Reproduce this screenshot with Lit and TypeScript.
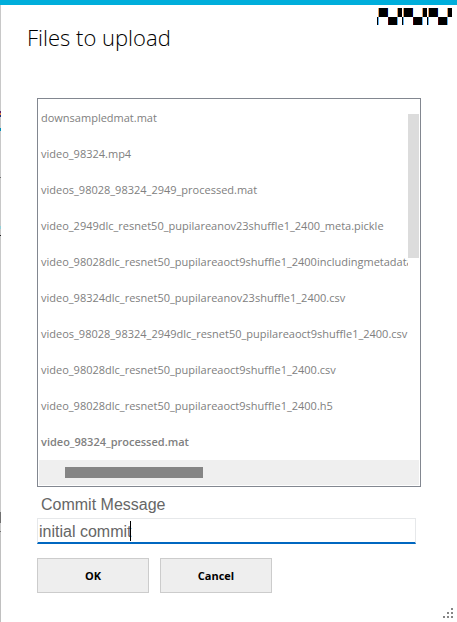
import { LitElement, html, css } from "lit";
import { customElement, state } from "lit/decorators.js";

interface FileEntry {
  name: string;
  strong?: boolean;
}

@customElement("app-root")
export class AppRoot extends LitElement {
  static styles = css`
    :host {
      display: block;
      font-family: "Open Sans", "Noto Sans", sans-serif;
      color: #808080;
    }
    .dialog {
      box-sizing: border-box;
      position: relative;
      display: flex;
      flex-direction: column;
      min-height: 100vh;
      background: #fff;
      border-top: 5px solid #00aedb;
    }
    .edge {
      position: absolute;
      left: 0;
      top: 0;
      bottom: 0;
      width: 1px;
      background: linear-gradient(
        #c8c8c8 106px, #60206a 106px, #60206a 108px, #e08040 108px, #e08040 110px,
        #203080 110px, #203080 112px, #c8c8c8 112px, #c8c8c8 123px, #0090b8 123px,
        #0090b8 126px, #c8c8c8 126px, #c8c8c8 172px, #707070 172px, #707070 173px,
        #c8c8c8 173px, #c8c8c8 221px, #90d0d8 221px, #90d0d8 224px, #c8c8c8 224px,
        #c8c8c8 230px, #202020 230px, #202020 231px, #c8c8c8 231px, #c8c8c8 507px,
        #707070 507px, #707070 518px, #c8c8c8 518px, #c8c8c8 526px, #707070 526px,
        #707070 527px, #c0c0c0 527px
      );
    }
    .header {
      display: flex;
      justify-content: space-between;
      align-items: flex-start;
      padding: 3px 5px 0 27px;
      height: 90px;
    }
    h1 {
      margin: 13px 0 0;
      font-size: 22px;
      line-height: 32px;
      font-weight: 300;
      color: #000;
    }
    .window-buttons {
      display: flex;
    }
    .window-button {
      display: block;
      width: 25px;
      height: 17px;
      padding: 0;
      border: 0;
      background: none;
    }
    .window-button svg {
      display: block;
    }
    form {
      display: flex;
      flex-direction: column;
      padding: 0 36px 0 37px;
    }
    .list {
      border: 1px solid #828790;
      padding: 1px;
    }
    .viewport {
      display: flex;
      height: 360px;
    }
    ul {
      flex: 1;
      min-width: 0;
      margin: 0;
      padding: 0;
      overflow: hidden;
      list-style: none;
    }
    li {
      padding-left: 2px;
      font-size: 11px;
      line-height: 36px;
      white-space: nowrap;
    }
    .strong {
      font-weight: 600;
    }
    .track-y {
      width: 11px;
      padding-top: 14px;
      box-sizing: border-box;
    }
    .thumb-y {
      height: 144px;
      background: #dcdcdc;
    }
    .track-x {
      height: 25px;
      padding: 7px 26px;
      box-sizing: border-box;
      background: #efefef;
    }
    .thumb-x {
      width: 42%;
      height: 11px;
      background: #858585;
    }
    label {
      margin: 8px 0 3px 4px;
      font: 16px/20px "Liberation Sans", Arial, sans-serif;
      color: #666;
    }
    .field {
      position: relative;
      margin-right: 5px;
    }
    input {
      display: block;
      box-sizing: border-box;
      width: 100%;
      height: 26px;
      padding: 2px 1px 0;
      border: 1px solid #e6e8ea;
      border-bottom: 2px solid #0067c0;
      border-radius: 0;
      outline: none;
      background: #fff;
      color: #666;
      caret-color: transparent;
      font: 16px "Liberation Sans", Arial, sans-serif;
    }
    .caret {
      position: absolute;
      left: 93px;
      top: 3px;
      width: 1px;
      height: 20px;
      background: #000;
    }
    .actions {
      display: flex;
      gap: 11px;
      margin-top: 14px;
    }
    .action {
      width: 112px;
      height: 35px;
      padding: 0;
      border: 1px solid #cccccc;
      background: #eeeeee;
      color: #000;
      font: 700 11px "Open Sans", "Noto Sans", sans-serif;
    }
    .grip {
      position: absolute;
      right: 4px;
      bottom: 4px;
      display: block;
    }
  `;

  @state() private message = "initial commit";

  private files: FileEntry[] = [
    { name: "downsampledmat.mat" },
    { name: "video_98324.mp4" },
    { name: "videos_98028_98324_2949_processed.mat" },
    { name: "video_2949dlc_resnet50_pupilareanov23shuffle1_2400_meta.pickle" },
    { name: "video_98028dlc_resnet50_pupilareaoct9shuffle1_2400includingmetadata" },
    { name: "video_98324dlc_resnet50_pupilareanov23shuffle1_2400.csv" },
    { name: "videos_98028_98324_2949dlc_resnet50_pupilareaoct9shuffle1_2400.csv" },
    { name: "video_98028dlc_resnet50_pupilareaoct9shuffle1_2400.csv" },
    { name: "video_98028dlc_resnet50_pupilareaoct9shuffle1_2400.h5" },
    { name: "video_98324_processed.mat", strong: true },
  ];

  private onInput(e: Event) {
    this.message = (e.target as HTMLInputElement).value;
  }

  private windowButton(label: string) {
    return html`<button class="window-button" type="button" aria-label=${label}>
      <svg width="25" height="17" viewBox="0 0 25 17" shape-rendering="crispEdges">
        <path d="M2 0h9v9h-9z M12 9h9v8h-9z M21 0h4v9h-4z M0 9h1v8h-1z" fill="#000" />
        <path d="M1 0h1v9h-1z M20 0h1v9h-1z" fill="#e0a060" />
        <path d="M1 9h1v8h-1z M20 9h1v8h-1z" fill="#60b0f0" />
        <path d="M10 0h1v9h-1z" fill="#000060" />
        <path d="M11 0h1v9h-1z" fill="#c0f8ff" />
        <path d="M11 9h1v8h-1z" fill="#500000" />
      </svg>
    </button>`;
  }

  render() {
    return html`
      <main class="dialog">
        <div class="edge"></div>
        <header class="header">
          <h1>Files to upload</h1>
          <div class="window-buttons">
            ${["Minimize", "Maximize", "Close"].map((l) => this.windowButton(l))}
          </div>
        </header>
        <form @submit=${(e: Event) => e.preventDefault()}>
          <div class="list">
            <div class="viewport">
              <ul>
                ${this.files.map((f) => html`<li class=${f.strong ? "strong" : ""}>${f.name}</li>`)}
              </ul>
              <div class="track-y"><div class="thumb-y"></div></div>
            </div>
            <div class="track-x"><div class="thumb-x"></div></div>
          </div>
          <label for="message">Commit Message</label>
          <div class="field">
            <input id="message" type="text" .value=${this.message} @input=${this.onInput} />
            <span class="caret"></span>
          </div>
          <div class="actions">
            <button class="action" type="submit">OK</button>
            <button class="action" type="button">Cancel</button>
          </div>
        </form>
        <svg class="grip" width="10" height="10" viewBox="0 0 10 10" shape-rendering="crispEdges">
          <path d="M8 0h2v2h-2z M4 4h2v2h-2z M8 4h2v2h-2z M0 8h2v2h-2z M4 8h2v2h-2z M8 8h2v2h-2z" fill="#858585" />
        </svg>
      </main>
    `;
  }
}
